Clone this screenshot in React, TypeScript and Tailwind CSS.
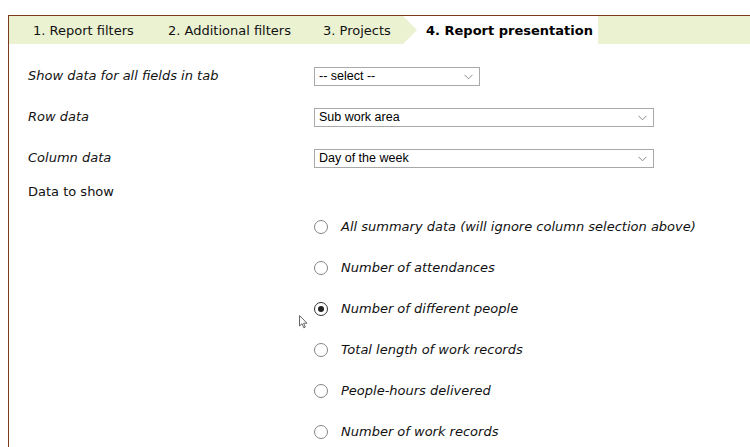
import React from "react";

const font = { fontFamily: '"DejaVu Sans", Verdana, sans-serif' };

function Select({ value, width }: { value: string; width: string }) {
  return (
    <div
      className={`${width} h-[19px] mt-[2px] border border-[#a9a9a9] bg-white flex items-center justify-between pl-[4px] pr-[6px] text-[12.5px] text-black`}
      style={{ fontFamily: '"Liberation Sans", Arial, sans-serif' }}
    >
      <span>{value}</span>
      <svg width="9" height="6" viewBox="0 0 9 6" fill="none">
        <path d="M0.5 0.8 L4.5 4.8 L8.5 0.8" stroke="#8a8a8a" strokeWidth="1" />
      </svg>
    </div>
  );
}

function Radio({ label, checked }: { label: string; checked?: boolean }) {
  return (
    <div className="flex items-center h-[41px]">
      <div
        className={`w-[14px] h-[14px] rounded-full border bg-white flex items-center justify-center ${
          checked ? "border-[#333333]" : "border-[#858585]"
        }`}
      >
        {checked && <div className="w-[6px] h-[6px] rounded-full bg-[#222222]" />}
      </div>
      <span className="ml-[13px] italic text-[13px] text-[#111]">{label}</span>
    </div>
  );
}

export default function App() {
  return (
    <div className="w-[750px] h-[447px] bg-white overflow-hidden relative" style={font}>
      <div className="ml-[8px] mt-[15px] border-l border-t border-[#7b3a1c] h-[432px]">
        <div className="flex h-[28px] bg-[#ebf2d2] text-[13px] text-[#111]">
          <div className="w-[141px] pl-[24px] flex items-center pt-[1px]">1. Report filters</div>
          <div className="w-[155px] pl-[18px] flex items-center pt-[1px]">2. Additional filters</div>
          <div className="w-[98px] pl-[18px] flex items-center relative pt-[1px]">
            3. Projects
            <span className="absolute top-0 right-[-14px] w-0 h-0 border-l-[14px] border-l-[#ebf2d2] border-y-[14px] border-y-transparent z-10" />
          </div>
          <div className="w-[195px] pl-[23px] bg-white flex items-center font-bold text-[13px] text-black pt-[2px]">
            4. Report presentation
          </div>
        </div>

        <div className="pl-[19px] text-[13px] text-[#111]">
          <div className="flex items-center h-[41px] mt-[11px]">
            <div className="w-[286px] italic">Show data for all fields in tab</div>
            <Select value="-- select --" width="w-[166px]" />
          </div>
          <div className="flex items-center h-[41px]">
            <div className="w-[286px] italic">Row data</div>
            <Select value="Sub work area" width="w-[340px]" />
          </div>
          <div className="flex items-center h-[41px]">
            <div className="w-[286px] italic">Column data</div>
            <Select value="Day of the week" width="w-[340px]" />
          </div>
          <div className="flex items-center h-[28px]">Data to show</div>
          <div className="pl-[286px]">
            <Radio label="All summary data (will ignore column selection above)" />
            <Radio label="Number of attendances" />
            <Radio label="Number of different people" checked />
            <Radio label="Total length of work records" />
            <Radio label="People-hours delivered" />
            <Radio label="Number of work records" />
          </div>
        </div>
      </div>
      <svg
        className="absolute left-[299px] top-[315px]"
        width="9"
        height="14"
        viewBox="0 0 9 14"
        fill="none"
      >
        <path d="M0.5 0.5 L0.5 11 L3 8.7 L4.8 12.8 L6.3 12.1 L4.6 8.2 L8 8.2 Z" fill="white" stroke="#666" strokeWidth="1" />
      </svg>
    </div>
  );
}
